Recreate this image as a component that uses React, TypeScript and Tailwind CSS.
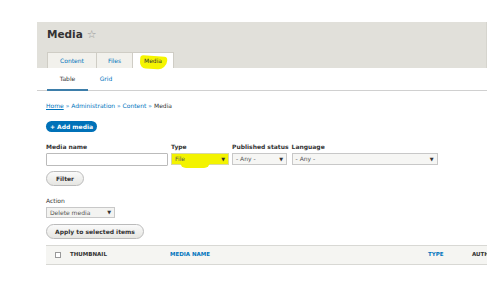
import React from 'react';

const Caret: React.FC = () => (
    <span className="text-[5px] leading-none text-[#333]">▼</span>
);

const App: React.FC = () => {
    return (
        <div className="w-[504px] h-[300px] bg-white overflow-hidden font-['DejaVu_Sans',sans-serif] text-[#333] leading-none">
            <div className="ml-[37px] mt-[22px] w-[450px]">
                {/* page header */}
                <div className="bg-[#e1e0da] h-[46px] px-[10px] flex flex-col justify-between border-r border-[#d6d5ce]">
                    <div className="flex items-center gap-[4px] pt-[7px]">
                        <h1 className="text-[10.5px] font-bold text-[#333] leading-none">Media</h1>
                        <span className="text-[11px] leading-none text-[#999]">☆</span>
                    </div>
                    <div className="flex items-end h-[16px]">
                        <div className="w-[49px] h-[16px] bg-[#f2f1ec] border-t border-l border-[#cfcdc5] flex items-center justify-center text-[6px] text-[#0074bd]">Content</div>
                        <div className="w-[36px] h-[16px] bg-[#f2f1ec] border-t border-l border-[#cfcdc5] flex items-center justify-center text-[6px] text-[#0074bd]">Files</div>
                        <div className="relative w-[42px] h-[16px] bg-white border-t border-l border-r border-[#cfcdc5] flex items-center justify-center text-[6px] text-[#333]">
                            <span className="absolute left-[7px] top-[3px] w-[27px] h-[13px] bg-[#f5f500] rounded-[3px] rounded-br-[9px] rounded-bl-[6px] rotate-[4deg]"></span>
                            <span className="relative">Media</span>
                        </div>
                    </div>
                </div>

                {/* secondary tabs */}
                <div className="h-[23px] border-b border-[#d0d0d0] px-[10px] flex items-end">
                    <div className="w-[41px] h-[23px] flex items-center justify-center text-[6px] text-[#333] border-b-2 border-[#3d7eaa] -mb-[1px]">Table</div>
                    <div className="w-[36px] h-[23px] flex items-center justify-center text-[6px] text-[#0074bd]">Grid</div>
                </div>

                <div className="px-[9px]">
                    {/* breadcrumb */}
                    <div className="mt-[12px] text-[6px] text-[#0074bd] leading-none">
                        <span className="underline">Home</span> » Administration » Content » <span className="text-[#333]">Media</span>
                    </div>

                    {/* add media */}
                    <div className="mt-[12px] flex">
                        <span className="inline-flex items-center h-[11px] w-[51px] justify-center rounded-full bg-[#0071b8] text-white text-[6px] font-bold">+ Add media</span>
                    </div>

                    {/* filters */}
                    <div className="mt-[12px] flex items-end gap-[3px]">
                        <div className="flex flex-col">
                            <label className="text-[6px] font-bold leading-none mb-[3px]">Media name</label>
                            <div className="w-[122px] h-[13px] border border-[#bbb] bg-white rounded-[1px]"></div>
                        </div>
                        <div className="flex flex-col">
                            <label className="text-[6px] font-bold leading-none mb-[3px]">Type</label>
                            <div className="relative w-[58px] h-[12px] mb-[1px] bg-[#f3f300] border border-[#d8d8a0] flex items-center justify-between px-[3px] text-[6px]">
                                <span className="absolute left-[8px] top-[8px] w-[30px] h-[6px] bg-[#f3f300] rounded-b-full"></span>
                                <span className="relative text-[#555]">File</span>
                                <span className="relative"><Caret /></span>
                            </div>
                        </div>
                        <div className="flex flex-col">
                            <label className="text-[6px] font-bold leading-none mb-[3px]">Published status</label>
                            <div className="w-[55px] h-[12px] mb-[1px] bg-[#f6f6f4] border border-[#c8c8c8] flex items-center justify-between px-[3px] text-[6px] text-[#555]">
                                <span>- Any -</span>
                                <Caret />
                            </div>
                        </div>
                        <div className="flex flex-col">
                            <label className="text-[6px] font-bold leading-none mb-[3px]">Language</label>
                            <div className="w-[146px] h-[12px] mb-[1px] bg-[#f6f6f4] border border-[#c8c8c8] flex items-center justify-between px-[3px] text-[6px] text-[#555]">
                                <span>- Any -</span>
                                <Caret />
                            </div>
                        </div>
                    </div>

                    <div className="mt-[5px] flex">
                        <span className="inline-flex items-center justify-center w-[38px] h-[15px] rounded-full border border-[#bbb] bg-gradient-to-b from-[#fafafa] to-[#e6e6e2] text-[6px] font-bold">Filter</span>
                    </div>

                    {/* action */}
                    <div className="mt-[12px] text-[6px] leading-none text-[#333]">Action</div>
                    <div className="mt-[3px] w-[69px] h-[11px] bg-[#f3f3f1] border border-[#c8c8c8] flex items-center justify-between px-[3px] text-[6px] text-[#555]">
                        <span>Delete media</span>
                        <Caret />
                    </div>
                    <div className="mt-[6px] flex">
                        <span className="inline-flex items-center justify-center w-[98px] h-[15px] rounded-full border border-[#bbb] bg-gradient-to-b from-[#fafafa] to-[#e6e6e2] text-[6px] font-bold">Apply to selected items</span>
                    </div>
                </div>

                {/* table header */}
                <div className="ml-[9px] mt-[6px] h-[20px] bg-[#f5f5f2] border-t border-b border-[#d8d8d4] flex items-center text-[5.5px] font-bold overflow-hidden whitespace-nowrap">
                    <div className="w-[24px] flex justify-center shrink-0">
                        <span className="w-[6px] h-[6px] border border-[#999] bg-white"></span>
                    </div>
                    <div className="w-[100px] shrink-0 text-[#333]">THUMBNAIL</div>
                    <div className="w-[258px] shrink-0 text-[#0074bd]">MEDIA NAME</div>
                    <div className="w-[44px] shrink-0 text-[#0074bd]">TYPE</div>
                    <div className="shrink-0 text-[#333]">AUTH</div>
                </div>
            </div>
        </div>
    );
};

export default App;
